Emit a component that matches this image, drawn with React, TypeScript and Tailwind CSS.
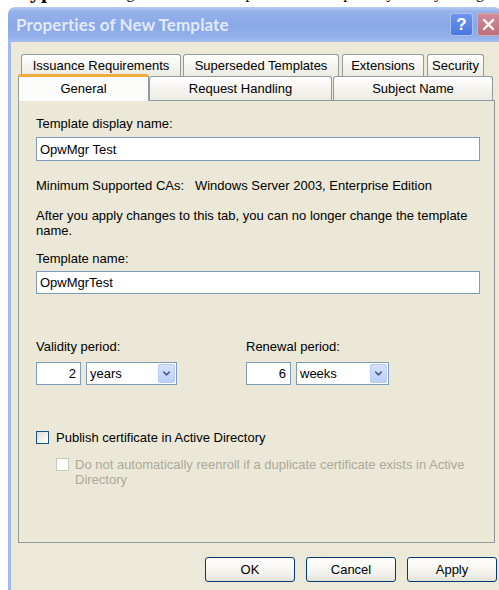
import { ChevronDown } from 'lucide-react';

const ui = "font-['Liberation_Sans',Arial,sans-serif] text-[13px] leading-[15px] text-black";

// Back-row tab (not selected)
function Tab({ label, className }: { label: string; className: string }) {
  return (
    <div
      className={`${className} flex items-center justify-center rounded-t-[3px] border border-b-0 border-[#919b9c] bg-[linear-gradient(to_bottom,#ffffff,#f3f2ec_60%,#ecebe3)]`}
    >
      {label}
    </div>
  );
}

function TextBox({ value, className }: { value: string; className: string }) {
  return (
    <div className={`${className} flex items-center border border-[#7f9db9] bg-white px-[3px]`}>
      {value}
    </div>
  );
}

function Period({ count, unit, selectWidth }: { count: string; unit: string; selectWidth: string }) {
  return (
    <div className="flex gap-[5px]">
      <div className="flex h-[23px] w-[45px] items-center justify-end border border-[#7f9db9] bg-white pr-[4px]">
        {count}
      </div>
      <div className={`${selectWidth} flex h-[23px] items-center border border-[#7f9db9] bg-white p-[1px]`}>
        <span className="flex-1 pl-[2px]">{unit}</span>
        <span className="flex h-full w-[17px] items-center justify-center rounded-[2px] border border-[#b9cbf3] bg-[linear-gradient(to_bottom,#d6e2fd,#bccffa)]">
          <ChevronDown size={11} strokeWidth={3.5} className="text-[#4d6185]" />
        </span>
      </div>
    </div>
  );
}

function Checkbox({ disabled }: { disabled?: boolean }) {
  return (
    <span
      className={
        disabled
          ? 'mt-[1px] h-[13px] w-[13px] shrink-0 border border-[#cac8bb] bg-white'
          : 'mt-[1px] h-[13px] w-[13px] shrink-0 border border-[#1c5180] bg-[linear-gradient(135deg,#dcdcd7,#ffffff)]'
      }
    />
  );
}

function DialogButton({ label }: { label: string }) {
  return (
    <button className="h-[25px] w-[90px] rounded-[3px] border border-[#003c74] bg-[linear-gradient(to_bottom,#ffffff,#f2f1ea_70%,#e3e1d6)] text-[13px]">
      {label}
    </button>
  );
}

export default function App() {
  return (
    <div className={`${ui} flex h-[590px] w-[499px] flex-col overflow-hidden bg-white`}>
      {/* page text above the dialog, mostly hidden behind the window */}
      <div className="h-[7px] shrink-0 overflow-hidden pl-[17px]">
        <p className="-mt-[21px] whitespace-nowrap font-['Liberation_Serif',serif] text-[22px] leading-[24px]">
          <b>Typical</b> <span className="text-[16px]">settings for the new template, and the options you may change</span>
        </p>
      </div>

      {/* Dialog window */}
      <div className="ml-[8px] flex w-[493px] flex-1 flex-col overflow-hidden rounded-t-[7px]">
        {/* Title bar */}
        <div className="flex h-[35px] shrink-0 items-center bg-[linear-gradient(to_bottom,#b6cbf3_0%,#95b1ea_14%,#8aa8e8_55%,#93b0eb_85%,#a3bdef_100%)] pl-[8px] pr-[1px]">
          <span className="font-['Lato',sans-serif] text-[17px] font-bold tracking-[0.1px] text-[#e2eafa]">
            Properties of New Template
          </span>
          <div className="ml-auto flex gap-[4px]">
            <div className="flex h-[23px] w-[23px] items-center justify-center rounded-[3px] border border-[#a9c0f3] bg-[linear-gradient(to_bottom,#6d95ef,#4a78e0)] font-['Liberation_Sans',sans-serif] text-[17px] font-bold text-white">
              ?
            </div>
            <div className="flex h-[23px] w-[23px] items-center justify-center rounded-[3px] border border-[#d9a6ad] bg-[linear-gradient(to_bottom,#cf8e98,#bd6f7b)]">
              <svg width="13" height="13" viewBox="0 0 13 13">
                <path d="M2 2 L11 11 M11 2 L2 11" stroke="white" strokeWidth="2.4" strokeLinecap="round" />
              </svg>
            </div>
          </div>
        </div>

        {/* Body */}
        <div className="flex flex-1 flex-col border-l-[3px] border-[#a3b8ec] bg-[#ece9d8] pl-[7px] pt-[12px]">
          {/* Tab rows */}
          <div className="flex h-[22px] pl-[3px]">
            <Tab label="Issuance Requirements" className="w-[160px]" />
            <Tab label="Superseded Templates" className="ml-[2px] w-[156px]" />
            <Tab label="Extensions" className="ml-[3px] w-[82px]" />
            <Tab label="Security" className="ml-[3px] w-[57px]" />
          </div>
          <div className="flex h-[24px] items-end">
            <div className="relative z-10 -mb-[1px] flex h-[27px] w-[131px] items-center justify-center rounded-t-[3px] border-x border-t-[3px] border-x-[#919b9c] border-t-[#f0ac3a] bg-[#fcfcfa] pb-[2px]">
              General
            </div>
            <Tab label="Request Handling" className="h-[24px] w-[183px]" />
            <Tab label="Subject Name" className="ml-[1px] h-[24px] w-[160px]" />
          </div>

          {/* General page */}
          <div className="flex h-[443px] w-[477px] flex-col border border-[#919b9c] border-r-[#8e9496] bg-[#ebe8d7] pl-[17px] pt-[15px]">
            <div>Template display name:</div>
            <TextBox value="OpwMgr Test" className="mt-[6px] h-[24px] w-[444px]" />
            <div className="mt-[17px] whitespace-pre">Minimum Supported CAs:   Windows Server 2003, Enterprise Edition</div>
            <div className="mt-[15px]">
              After you apply changes to this tab, you can no longer change the template
              <br />
              name.
            </div>
            <div className="mt-[13px]">Template name:</div>
            <TextBox value="OpwMgrTest" className="mt-[5px] h-[23px] w-[444px]" />

            <div className="mt-[45px] flex">
              <div className="w-[210px]">
                <div>Validity period:</div>
                <div className="mt-[8px]">
                  <Period count="2" unit="years" selectWidth="w-[91px]" />
                </div>
              </div>
              <div>
                <div>Renewal period:</div>
                <div className="mt-[8px]">
                  <Period count="6" unit="weeks" selectWidth="w-[93px]" />
                </div>
              </div>
            </div>

            <label className="mt-[45px] flex gap-[7px]">
              <Checkbox />
              <span>Publish certificate in Active Directory</span>
            </label>
            <label className="mt-[12px] flex gap-[6px] pl-[20px] text-[#aca899]">
              <Checkbox disabled />
              <span>
                Do not automatically reenroll if a duplicate certificate exists in Active
                <br />
                Directory
              </span>
            </label>
          </div>

          {/* Dialog buttons */}
          <div className="ml-[187px] mt-[14px] flex gap-[11px]">
            <DialogButton label="OK" />
            <DialogButton label="Cancel" />
            <DialogButton label="Apply" />
          </div>
        </div>
      </div>
    </div>
  );
}
